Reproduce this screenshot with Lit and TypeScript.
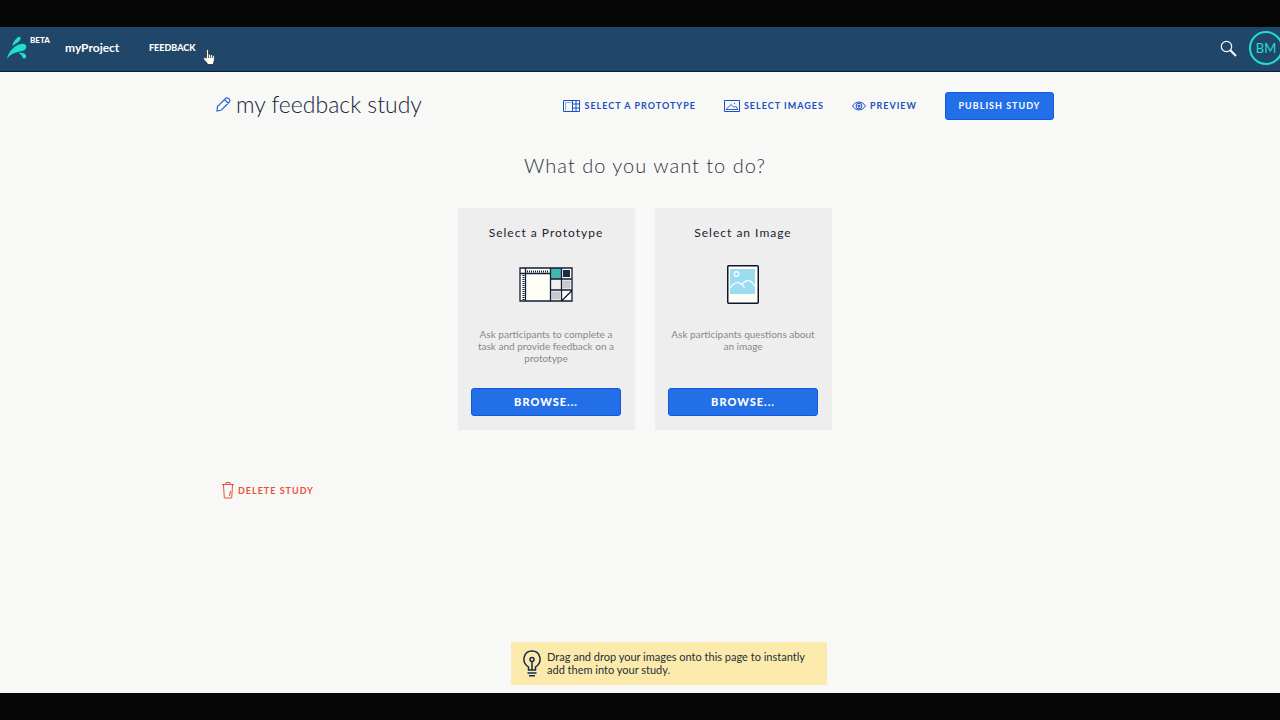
import { LitElement, html, css, svg } from "lit";
import { customElement, property } from "lit/decorators.js";

const prototypeSmall = svg`<svg class="icon" width="17" height="12" viewBox="0 0 17 12" fill="none" stroke="currentColor"><path d="M.5 .5h16v11H.5zM9.500 .5v11M13 .5v11M9.500 4h7M9.500 8h7"/><path d="M2.500 2.500h6M2.500 2.500v8" stroke-opacity=".45"/></svg>`;
const imagesSmall = svg`<svg class="icon" width="16" height="12" viewBox="0 0 16 12" fill="none" stroke="currentColor"><path d="M.5 .5h15v11H.5z"/><path d="M2 9.500l5-5 3 3 1.500-1.500L14 9.500zM10 3.500h1" stroke-width=".9"/></svg>`;
const eyeSmall = svg`<svg class="icon" width="14" height="12" viewBox="0 0 14 12" fill="none" stroke="currentColor"><path d="M.6 6C3.500 .8 10.500 .8 13.400 6 10.500 11.200 3.500 11.200 .6 6z"/><circle cx="7" cy="6" r="2.900"/><circle cx="7" cy="6" r="1" fill="currentColor"/></svg>`;

const prototypeArt = svg`<svg width="54" height="35" viewBox="0 0 54 35" fill="none">
  <path d="M1 1h52v33H1z" fill="#fffff8"/>
  <path d="M31 1h11v11H31z" fill="#45b8ac"/>
  <path d="M31 12h11v11H31z" fill="#f0f0f0"/>
  <path d="M32.500 24.500h8.500v8h-8.500zM43.500 13.500h8v8h-8z" fill="#c8c9cc"/>
  <path d="M44 3h7v7h-7z" fill="#1f2b45"/>
  <path d="M1 1h52v33H1zM6.500 1v33M31.500 1v33M42.500 1v33M31 12h22M31 23h22M1 6.500h30M43 33.500L53 23.500" stroke="#121c38" stroke-width="1.300"/>
  <path d="M8 4.500h22M4.500 8v25" stroke="#121c38" stroke-width="2" stroke-dasharray="1 1"/>
</svg>`;
const imageArt = svg`<svg width="32" height="39" viewBox="0 0 32 39" fill="none">
  <rect x=".75" y=".75" width="30.500" height="37.500" rx="1" fill="#fffff8" stroke="#10152e" stroke-width="1.500"/>
  <path d="M3 4h25v25H3z" fill="#9bdcf0"/>
  <path d="M3 23c5-7 10-7 14.500-.5M15 19.500c4.500-6 9-5 13 2" stroke="#fff" stroke-width="1.200"/>
  <circle cx="9.500" cy="9" r="2.300" stroke="#fff" stroke-width="1.200"/>
</svg>`;

@customElement("study-card")
export class StudyCard extends LitElement {
  @property() heading = "";
  @property() text = "";
  @property({ attribute: false }) art: unknown;

  static styles = css`
    :host { display: flex; flex-direction: column; align-items: center; box-sizing: border-box; padding: 16px 14px 14px 13px; background: #eeeeee; text-align: center; }
    h2 { margin: 0; font-size: 12px; line-height: 18px; font-weight: 400; letter-spacing: 1px; color: #1d2330; }
    .art { display: flex; align-items: center; height: 40px; margin: 22px 0 24px; }
    p { flex: 1; margin: 0 0 24px; font-size: 10px; line-height: 12px; color: #858a8d; min-height: 36px; }
    button { width: 100%; height: 28px; padding: 0; border: 1px solid #1259dd; border-radius: 3px; background: #226fe8; color: #fff; font: 900 11px/16px Lato, sans-serif; letter-spacing: 1px; cursor: pointer; }
  `;

  render() {
    return html`<h2>${this.heading}</h2>
      <div class="art">${this.art}</div>
      <p>${this.text}</p>
      <button type="button">BROWSE...</button>`;
  }
}

@customElement("app-root")
export class AppRoot extends LitElement {
  static styles = css`
    :host { display: flex; flex-direction: column; box-sizing: border-box; min-height: 100vh; overflow: hidden; border: solid #060606; border-width: 27px 0; background: #f8f8f7; font-family: Lato, "Open Sans", sans-serif; color: #14233c; }
    .stage { position: relative; flex: 1; display: flex; flex-direction: column; width: calc(100% + 10px); }
    header { display: flex; align-items: center; box-sizing: border-box; height: 45px; padding: 0 7px 2px 6px; background: #20466a; border-bottom: 1px solid #0a1a48; color: #fff; }
    header a { color: inherit; text-decoration: none; }
    .logo { display: flex; gap: 2px; width: 59px; }
    .beta { font-size: 8px; line-height: 8px; font-weight: 900; }
    .project { width: 84px; font-size: 12px; line-height: 16px; font-weight: 700; }
    .section { font-size: 9px; line-height: 16px; font-weight: 900; }
    .search { margin-left: auto; padding: 0; border: 0; background: none; display: flex; }
    .avatar { box-sizing: border-box; width: 34px; height: 34px; margin-left: 12px; border: 2px solid #1fe0cb; border-radius: 50%; background: none; padding: 0; color: #1fe0cb; font: 400 13px/30px Lato, sans-serif; }
    .cursor { position: absolute; left: 203px; top: 22px; }
    main { width: 100%; max-width: 860px; margin: 0 auto; }
    .toolbar { display: flex; align-items: center; padding: 20px 21px 0 1px; }
    h1 { display: flex; align-items: center; gap: 5px; margin: 0 auto 0 0; padding-bottom: 4px; font-size: 23px; line-height: 24px; font-weight: 300; }
    .action { display: flex; align-items: center; gap: 4px; margin-right: 28px; padding: 0; border: 0; background: none; color: #1b50c0; font: 700 9px/12px Lato, sans-serif; letter-spacing: 1px; }
    .publish { width: 109px; height: 28px; padding: 0; border: 1px solid #1259dd; border-radius: 3px; background: #226fe8; color: #fff; font: 700 9px/12px Lato, sans-serif; letter-spacing: 1px; }
    .question { margin: 32px 0 0; text-align: center; font-size: 20px; line-height: 26px; font-weight: 300; letter-spacing: 1px; color: #303540; }
    .cards { display: grid; grid-template-columns: 177px 177px; justify-content: center; gap: 20px; margin-top: 30px; }
    .delete { margin: 52px 0 0 7px; color: #ea5038; }
    .tip { display: flex; gap: 6px; align-self: center; box-sizing: border-box; width: 316px; margin: auto 0 8px 48px; padding: 8px 12px; background: #fbeaac; font-size: 11px; line-height: 13px; color: #24303a; }
    .tip p { margin: 0; }
    .tip svg { flex: none; }
  `;

  render() {
    return html`<div class="stage">
      <header>
        <a class="logo" href="#" aria-label="Home">
          <svg width="22" height="24" viewBox="0 0 22 24" fill="#1fe0cb"><path d="M1 23C2 17 7 10.500 13 8.500c4-1.500 7-.5 7.300 2 .3 3-2.800 4.500-6.300 5C8 16.500 4 18.500 1 23z"/><path d="M6 10.500C7 6 9.500 2.500 12.500 1c2-.6 2.600 1 1.700 2.800C12.500 7 9.500 7 6 10.500z"/><path d="M12.500 17c3.500-.8 7.200 0 7.700 3 .2 2.500-2.200 3.300-3.400 1.700-1-1.700-1.800-3.700-4.300-4.700z"/></svg>
          <span class="beta">BETA</span>
        </a>
        <a class="project" href="#">myProject</a>
        <a class="section" href="#">FEEDBACK</a>
        <button class="search" type="button" aria-label="Search">
          <svg width="17" height="17" viewBox="0 0 17 17" fill="none" stroke="#fff"><circle cx="6.500" cy="6.500" r="5.200" stroke-width="1.200"/><path d="M10.300 10.300L16 16" stroke-width="2"/></svg>
        </button>
        <button class="avatar" type="button">BM</button>
      </header>
      <svg class="cursor" width="12" height="16" viewBox="0 0 12 16"><path d="M3.500 9V1.500c0-1.300 2-1.300 2 0V5.500c.8-.6 1.800-.4 2 .4.800-.5 1.700-.1 1.900.6 1-.4 2 .1 2 1.200V11c0 1-1 2-1 4.500H4.500c0-2-2.500-3-4-5.500-.3-1.300 1-1.800 3-1z" fill="#fffff6" stroke="#18202c" stroke-width=".7"/><path d="M5.500 6v3M7.500 6v3M9.500 7v2" stroke="#18202c" stroke-width=".7"/></svg>
      <main>
        <div class="toolbar">
          <h1>
            <svg width="15" height="15" viewBox="0 0 15 15" fill="none" stroke="#2869dc" stroke-width="1.200"><path d="M1 14l.5-4.500L9.500 1.500c2-2 5.500 1.300 3.800 3.500L5.500 13 1 14zM8.500 2.500l4 4"/></svg>
            my feedback study
          </h1>
          <button class="action" type="button">${prototypeSmall}SELECT A PROTOTYPE</button>
          <button class="action" type="button">${imagesSmall}SELECT IMAGES</button>
          <button class="action" type="button">${eyeSmall}PREVIEW</button>
          <button class="publish" type="button">PUBLISH STUDY</button>
        </div>
        <h2 class="question">What do you want to do?</h2>
        <div class="cards">
          <study-card heading="Select a Prototype" text="Ask participants to complete a task and provide feedback on a prototype" .art=${prototypeArt}></study-card>
          <study-card heading="Select an Image" text="Ask participants questions about an image" .art=${imageArt}></study-card>
        </div>
        <button class="action delete" type="button">
          <svg width="12" height="17" viewBox="0 0 12 17" fill="none" stroke="currentColor"><path d="M0 2.500h12M4 2.500v-2h4v2M1.500 3l.8 13h7.400l.8-13M7.500 14l1-5"/></svg>
          DELETE STUDY
        </button>
      </main>
      <aside class="tip">
        <svg width="18" height="27" viewBox="0 0 18 27" fill="none" stroke="#152b4a" stroke-width="1.500"><path d="M5.500 20v-3C-2.500 11.500 1 1 9 1s11.500 10.500 3.500 16v3zM9 11.500V20M4.500 23h9M6 25.800h6"/><circle cx="9" cy="9.500" r="2"/></svg>
        <p>Drag and drop your images onto this page to instantly add them into your study.</p>
      </aside>
    </div>`;
  }
}
